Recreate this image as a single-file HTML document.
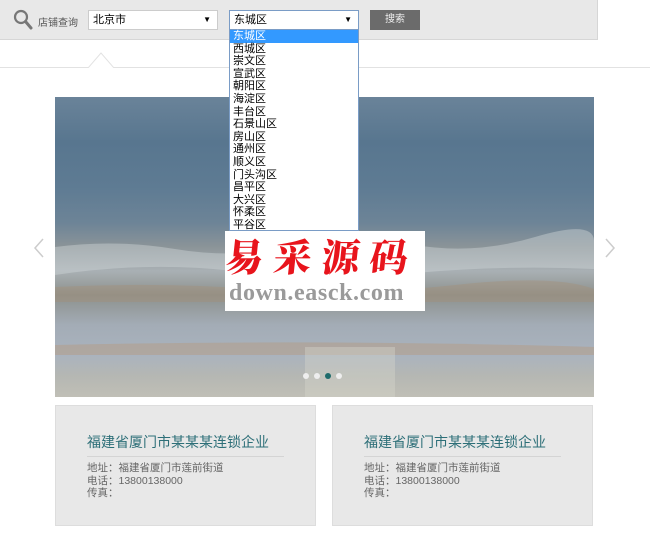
<!DOCTYPE html>
<html><head><meta charset="utf-8"><style>
*{margin:0;padding:0;box-sizing:border-box}
body{width:650px;height:542px;background:#fff;position:relative;overflow:hidden;font-family:"Liberation Sans","Noto Sans CJK SC",sans-serif;font-size:11px;color:#333}
.abs{position:absolute}
.bar{left:0;top:0;width:598px;height:40px;background:#e8e8e8;border-bottom:1px solid #d6d6d6;border-right:1px solid #d6d6d6}
.sel{height:20px;background:#fff;border:1px solid #ccc;font-size:11px;line-height:18px;padding-left:4px;color:#000}
.sel .ar{position:absolute;right:6px;top:0;font-size:8px}
.list{left:229px;top:30px;width:130px;height:201px;background:#fff;border:1px solid #7a9cc6;border-top:none}
.list div{height:12.6px;line-height:12.6px;font-size:11px;padding-left:3px;color:#000}
.photo{left:55px;top:97px;width:539px;height:300px;background:linear-gradient(180deg,#6a8399 0%,#58768f 15%,#5e7b93 30%,#6d8497 42%,#8b9498 50%,#a9b0b4 58%,#8d918d 66%,#a3acb6 76%,#aab3be 86%,#b5b7b3 93%,#c0bfb6 100%)}
.card{top:405px;width:261px;height:121px;background:#e8e8e8;border:1px solid #ddd}
.card h3{position:absolute;left:31px;top:26px;font-size:14px;font-weight:normal;color:#2d6f78;width:197px;border-bottom:1px solid #d4d4d4;padding-bottom:4px}
.card p{position:absolute;left:31px;top:56px;font-size:10.5px;line-height:12.5px;color:#666}
.dot{top:373px;width:6px;height:6px;border-radius:50%;background:#eee}
</style></head><body>
<div class="abs bar"></div>
<svg class="abs" style="left:13px;top:9px" width="20" height="22" viewBox="0 0 20 22"><circle cx="8" cy="8" r="6" fill="none" stroke="#777" stroke-width="2.2"/><path d="M12.5 12.5L18 19" stroke="#777" stroke-width="3" stroke-linecap="round"/></svg>
<div class="abs" style="left:38px;top:14px;font-size:10px;color:#555">店铺查询</div>
<div class="abs sel" style="left:88px;top:10px;width:130px">北京市<span class="ar">▼</span></div>
<div class="abs sel" style="left:229px;top:10px;width:130px;border-color:#7a9cc6">东城区<span class="ar">▼</span></div>
<div class="abs" style="left:370px;top:10px;width:50px;height:20px;background:#6b6b6b;color:#eee;font-size:10px;text-align:center;line-height:20px">搜索</div>
<div class="abs" style="left:0;top:67px;width:650px;height:1px;background:#e2e2e2"></div>
<svg class="abs" style="left:88px;top:50px" width="26" height="18"><path d="M0 18L13 3L26 18" fill="#fff" stroke="#e2e2e2"/></svg>
<div class="abs photo"></div>
<svg class="abs" style="left:55px;top:97px" width="539" height="300">
<path d="M0 150 Q60 142 120 152 T240 150 T360 148 T480 140 T539 145 L539 172 Q450 168 360 176 T180 174 T0 178Z" fill="#cfd4d6" opacity=".45"/>
<path d="M0 190 Q100 185 200 192 T400 188 T539 192 L539 205 L0 205Z" fill="#a58e75" opacity=".4"/>
<path d="M0 248 Q270 242 539 250 L539 258 L0 258Z" fill="#b39c84" opacity=".5"/>
<rect x="250" y="250" width="90" height="50" fill="#d8d6ce" opacity=".4"/>
</svg>
<svg class="abs" style="left:33px;top:238px" width="12" height="20"><path d="M10 1L2 10L10 19" fill="none" stroke="#ccc" stroke-width="1.5"/></svg>
<svg class="abs" style="left:604px;top:238px" width="12" height="20"><path d="M2 1L10 10L2 19" fill="none" stroke="#ccc" stroke-width="1.5"/></svg>
<div class="abs" style="left:225px;top:231px;width:200px;height:80px;background:#fff"></div>
<div class="abs" style="left:226px;top:233px;font-family:'Noto Serif CJK SC',serif;font-size:38px;font-weight:900;color:#e8141c;letter-spacing:10px;line-height:44px;transform:skewX(-6deg)">易采源码</div>
<div class="abs" style="left:229px;top:280px;font-family:'Liberation Serif',serif;font-size:24px;font-weight:bold;color:#9a9a9a;line-height:26px;letter-spacing:0.6px">down.easck.com</div>
<div class="abs dot" style="left:303px"></div>
<div class="abs dot" style="left:314px"></div>
<div class="abs dot" style="left:325px;background:#1e6b6b"></div>
<div class="abs dot" style="left:336px"></div>
<div class="abs list">
<div style="background:#3399ff;color:#fff">东城区</div><div>西城区</div><div>崇文区</div><div>宣武区</div><div>朝阳区</div><div>海淀区</div><div>丰台区</div><div>石景山区</div><div>房山区</div><div>通州区</div><div>顺义区</div><div>门头沟区</div><div>昌平区</div><div>大兴区</div><div>怀柔区</div><div>平谷区</div>
</div>
<div class="abs card" style="left:55px"><h3>福建省厦门市某某某连锁企业</h3><p>地址：福建省厦门市莲前街道<br>电话：13800138000<br>传真：</p></div>
<div class="abs card" style="left:332px"><h3>福建省厦门市某某某连锁企业</h3><p>地址：福建省厦门市莲前街道<br>电话：13800138000<br>传真：</p></div>
</body></html>
